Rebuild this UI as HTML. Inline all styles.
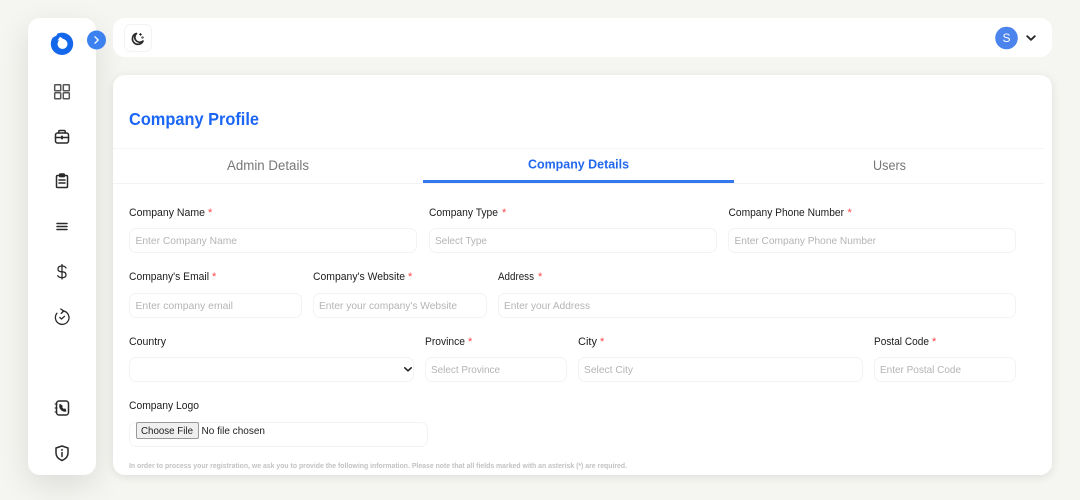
<!DOCTYPE html>
<html><head><meta charset="utf-8"><style>
html,body{margin:0;padding:0;width:1080px;height:500px;overflow:hidden;background:#f5f6f1;font-family:"Liberation Sans",sans-serif}
#w{position:absolute;left:0;top:0;width:1080px;height:500px;filter:blur(.35px)}
.a{position:absolute;background:#fff}
.side{left:28px;top:18px;width:68px;height:457px;border-radius:12px;box-shadow:0 10px 32px rgba(0,0,0,.11)}
.top{left:113px;top:18px;width:939px;height:39px;border-radius:12px}
.card{left:113px;top:75px;width:939px;height:400px;border-radius:12px;box-shadow:0 2px 10px rgba(0,0,0,.10)}
.i{position:absolute;background:#fff;border:1px solid #f3f3f3;border-radius:7px;box-sizing:border-box}
svg{position:absolute;left:0;top:0}
.l{font-size:11px;fill:#1c1c1c}
.s{font-size:11px;fill:#f44}
.p{font-size:10.500px;fill:#b4b4b4}
.ic{fill:none;stroke:#2a2a2a;stroke-width:1.5;stroke-linecap:round;stroke-linejoin:round}
</style></head><body><div id="w">
<div class="a side"></div>
<div class="a top"></div>
<div class="a card"></div>
<div class="i" style="left:124px;top:24px;width:28px;height:28px;border-radius:7px"></div>

<div class="i" style="left:129px;top:228px;width:288px;height:25px"></div>
<div class="i" style="left:429px;top:228px;width:288px;height:25px"></div>
<div class="i" style="left:728px;top:228px;width:288px;height:25px"></div>
<div class="i" style="left:129px;top:293px;width:173px;height:25px"></div>
<div class="i" style="left:313px;top:293px;width:174px;height:25px"></div>
<div class="i" style="left:498px;top:293px;width:518px;height:25px"></div>
<div class="i" style="left:129px;top:357px;width:285px;height:25px"></div>
<div class="i" style="left:425px;top:357px;width:142px;height:25px"></div>
<div class="i" style="left:578px;top:357px;width:285px;height:25px"></div>
<div class="i" style="left:874px;top:357px;width:142px;height:25px"></div>
<div class="i" style="left:129px;top:422px;width:299px;height:25px"></div>
<div style="position:absolute;left:136px;top:422px;width:63px;height:17px;box-sizing:border-box;background:#efefef;border:1px solid #9a9a9a;border-radius:2px"></div>
<div style="position:absolute;left:113px;top:148px;width:931px;height:1px;background:#f5f5f5"></div>
<div style="position:absolute;left:113px;top:183px;width:931px;height:1px;background:#f3f3f3"></div>
<div style="position:absolute;left:423px;top:180px;width:311px;height:3px;background:#3478f0"></div>

<svg width="1080" height="500" viewBox="0 0 1080 500">
<!-- logo -->
<circle cx="62" cy="43.800" r="11.200" fill="#1467ea"/>
<path d="M48 38.500 L53 37.500 L56.500 35.500 L58.500 31 L48 29 Z" fill="#fff"/>
<circle cx="62.500" cy="44" r="5" fill="#fff"/>
<path d="M57.500 40.500 L60 36.800 L64 39.500 Z" fill="#fff"/>
<circle cx="96.500" cy="40" r="9.500" fill="#3b82f0"/>
<path d="M95 36.800 L98.200 40 L95 43.200" fill="none" stroke="#fff" stroke-width="1.300" stroke-linecap="round" stroke-linejoin="round"/>

<g class="ic">
<!-- dashboard -->
<rect x="54.700" y="84.700" width="6" height="6" rx=".6" stroke="#555"/><rect x="63.300" y="84.700" width="6" height="6" rx=".6" stroke="#555"/>
<rect x="54.700" y="92.700" width="6" height="6" rx=".6" stroke="#555"/><rect x="63.300" y="92.700" width="6" height="6" rx=".6" stroke="#555"/>
<!-- briefcase -->
<rect x="55.500" y="133" width="13" height="10" rx="2"/><path d="M58.800 133 v-1.500 q0-1 1-1 h4.400 q1 0 1 1 V133 M55.500 137.500 h13"/><path d="M62 136.500 v2" stroke-width="2"/>
<!-- clipboard -->
<rect x="56.500" y="175.500" width="11" height="12" rx="1"/><rect x="59.700" y="174" width="4.600" height="2.600" rx=".5" fill="#2a2a2a"/><path d="M59 180 h6 M59 183 h6"/>
<!-- menu -->
<path d="M57 223.500 h10 M57 226.500 h10 M57 229.500 h10"/>
<!-- dollar -->
<path d="M66 268 q-1-2-4-2 q-4 0-4 3 q0 2.800 4 2.800 q4 0 4 2.900 q0 3-4 3 q-3 0-4.200-2 M62 264.500 v14.500" stroke-width="1.300"/>
<!-- history check -->
<path d="M62.500 310.800 A6.800 6.800 0 1 1 57 313.200 M60.800 309 L63.800 311 L61.200 313.400 M59.800 317.500 L61.500 319 L64.500 316.300" stroke-width="1.300"/>
<!-- contact book -->
<rect x="56.500" y="401" width="12" height="14" rx="2.500"/><path d="M55 404 h2 M55 408 h2 M55 412 h2" stroke-width="1.100"/>
<path d="M60 404.500 q-.8 3 1.200 5 q2 2 4.600 1.600 l-.6-2 -1.800 .3 -1.600-1.700 .3-1.700 z" stroke-width="1.100" fill="#2a2a2a"/>
<!-- shield -->
<path d="M62 446 L68 448 V453 Q68 458 62 460.500 Q56 458 56 453 V448 Z"/><path d="M62 452.500 V456.500"/><path d="M62 449.800 V450" stroke-width="1.800"/>
<!-- moon -->
<path d="M136.500 33.500 A5.500 5.500 0 1 0 143 41 A4.800 4.800 0 0 1 136.500 33.500 Z" stroke-width="1.700"/><path d="M140.500 33.500 v1.800 M139.600 34.400 h1.800" stroke-width="1.100"/><circle cx="142.500" cy="37.500" r=".4"/>
<!-- chevron -->
<path d="M1027.200 36.200 L1031 39.800 L1034.800 36.200" stroke-width="1.900"/>
</g>

<circle cx="1006.500" cy="38" r="11.300" fill="#4c84ee"/>
<text x="1006.500" y="42.200" text-anchor="middle" font-size="12" fill="#fff">S</text>

<text x="129" y="125" font-size="17.500" font-weight="bold" fill="#1b66f5" textLength="130" lengthAdjust="spacingAndGlyphs">Company Profile</text>
<text x="227" y="170" font-size="13.500" fill="#777" textLength="82" lengthAdjust="spacingAndGlyphs">Admin Details</text>
<text x="528" y="168.500" font-size="12.500" font-weight="bold" fill="#2268ee" textLength="101" lengthAdjust="spacingAndGlyphs">Company Details</text>
<text x="873" y="170" font-size="13.500" fill="#777" textLength="33" lengthAdjust="spacingAndGlyphs">Users</text>

<text class="l" x="129" y="216" textLength="76" lengthAdjust="spacingAndGlyphs">Company Name</text><text class="s" x="208" y="216">*</text>
<text class="l" x="429" y="216" textLength="69" lengthAdjust="spacingAndGlyphs">Company Type</text><text class="s" x="502" y="216">*</text>
<text class="l" x="728.500" y="216" textLength="115.500" lengthAdjust="spacingAndGlyphs">Company Phone Number</text><text class="s" x="847.500" y="216">*</text>
<text class="l" x="129" y="280" textLength="80" lengthAdjust="spacingAndGlyphs">Company's Email</text><text class="s" x="212" y="280">*</text>
<text class="l" x="313" y="280" textLength="92" lengthAdjust="spacingAndGlyphs">Company's Website</text><text class="s" x="408" y="280">*</text>
<text class="l" x="498" y="280" textLength="36" lengthAdjust="spacingAndGlyphs">Address</text><text class="s" x="538" y="280">*</text>
<text class="l" x="129" y="345" textLength="37" lengthAdjust="spacingAndGlyphs">Country</text>
<text class="l" x="425" y="345" textLength="40" lengthAdjust="spacingAndGlyphs">Province</text><text class="s" x="468" y="345">*</text>
<text class="l" x="578" y="345" textLength="19" lengthAdjust="spacingAndGlyphs">City</text><text class="s" x="600" y="345">*</text>
<text class="l" x="874" y="345" textLength="55" lengthAdjust="spacingAndGlyphs">Postal Code</text><text class="s" x="932" y="345">*</text>
<text class="l" x="129" y="409" textLength="70" lengthAdjust="spacingAndGlyphs">Company Logo</text>

<text class="p" x="135.500" y="244" textLength="101.500" lengthAdjust="spacingAndGlyphs">Enter Company Name</text>
<text class="p" x="435" y="244" textLength="52" lengthAdjust="spacingAndGlyphs">Select Type</text>
<text class="p" x="734.500" y="244" textLength="141.500" lengthAdjust="spacingAndGlyphs">Enter Company Phone Number</text>
<text class="p" x="135.500" y="309" textLength="97.500" lengthAdjust="spacingAndGlyphs">Enter company email</text>
<text class="p" x="319" y="309" textLength="138" lengthAdjust="spacingAndGlyphs">Enter your company's Website</text>
<text class="p" x="504" y="309" textLength="86" lengthAdjust="spacingAndGlyphs">Enter your Address</text>
<text class="p" x="431" y="373" textLength="69" lengthAdjust="spacingAndGlyphs">Select Province</text>
<text class="p" x="584" y="373" textLength="49" lengthAdjust="spacingAndGlyphs">Select City</text>
<text class="p" x="880" y="373" textLength="81" lengthAdjust="spacingAndGlyphs">Enter Postal Code</text>

<path d="M404.800 367.800 L408 370.800 L411.200 367.800" fill="none" stroke="#222" stroke-width="1.600" stroke-linecap="round" stroke-linejoin="round"/>

<text x="141" y="434" font-size="10.500" fill="#222" textLength="52" lengthAdjust="spacingAndGlyphs">Choose File</text>
<text x="201.500" y="434" font-size="10.500" fill="#222" textLength="63.500" lengthAdjust="spacingAndGlyphs">No file chosen</text>
<text x="129" y="468" font-size="7.500" font-weight="bold" fill="#c2c2c2" textLength="498" lengthAdjust="spacingAndGlyphs">In order to process your registration, we ask you to provide the following information. Please note that all fields marked with an asterisk (*) are required.</text>
</svg>
</div></body></html>
